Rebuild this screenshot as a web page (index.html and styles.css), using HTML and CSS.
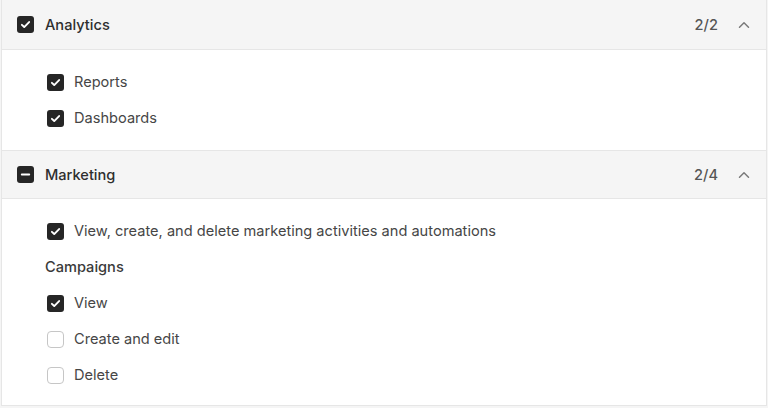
FILE: index.html
```html
<!DOCTYPE html>
<html>
<head>
<meta charset="utf-8">
<link rel="stylesheet" href="styles.css">
</head>
<body>
<div class="panel">
  <section class="group">
    <div class="group-head">
      <span class="cb cb-on"><svg viewBox="0 0 16 16"><path d="M4.6 8.3l2.2 2.1 4.6-4.7"/></svg></span>
      <span class="group-title">Analytics</span>
      <span class="count">2/2</span>
      <svg class="chev" viewBox="0 0 12 8"><path d="M1.5 6.2L6 1.8l4.5 4.4"/></svg>
    </div>
    <div class="group-body">
      <div class="item"><span class="cb cb-on"><svg viewBox="0 0 16 16"><path d="M4.6 8.3l2.2 2.1 4.6-4.7"/></svg></span><span class="label">Reports</span></div>
      <div class="item"><span class="cb cb-on"><svg viewBox="0 0 16 16"><path d="M4.6 8.3l2.2 2.1 4.6-4.7"/></svg></span><span class="label">Dashboards</span></div>
    </div>
  </section>
  <section class="group">
    <div class="group-head">
      <span class="cb cb-on"><svg viewBox="0 0 16 16"><path d="M4.5 8h7"/></svg></span>
      <span class="group-title">Marketing</span>
      <span class="count">2/4</span>
      <svg class="chev" viewBox="0 0 12 8"><path d="M1.5 6.2L6 1.8l4.5 4.4"/></svg>
    </div>
    <div class="group-body">
      <div class="item"><span class="cb cb-on"><svg viewBox="0 0 16 16"><path d="M4.6 8.3l2.2 2.1 4.6-4.7"/></svg></span><span class="label">View, create, and delete marketing activities and automations</span></div>
      <div class="subhead">Campaigns</div>
      <div class="item"><span class="cb cb-on"><svg viewBox="0 0 16 16"><path d="M4.6 8.3l2.2 2.1 4.6-4.7"/></svg></span><span class="label">View</span></div>
      <div class="item"><span class="cb cb-off"></span><span class="label">Create and edit</span></div>
      <div class="item"><span class="cb cb-off"></span><span class="label">Delete</span></div>
    </div>
  </section>
</div>
</body>
</html>
```
FILE: styles.css
```css
* { box-sizing: border-box; }
html, body { margin: 0; padding: 0; }
body {
  background: #f5f5f5;
  font-family: Inter, "Noto Sans", sans-serif;
  font-size: 14.6px;
  color: #444;
  width: 768px;
  height: 408px;
  overflow: hidden;
}
.panel {
  margin: 0 1px;
  background: #fff;
  border: 1px solid #e6e6e6;
  border-top: none;
  height: 406px;
}
.group-head {
  display: flex;
  align-items: center;
  height: 50px;
  padding: 0 16px 0 15px;
  background: #f5f5f5;
  border-bottom: 1px solid #e6e6e6;
}
.group + .group .group-head { border-top: 1px solid #e6e6e6; height: 49px; }
.group-title {
  margin-left: 11px;
  font-weight: 500;
  color: #2e2e2e;
  flex: 1;
}
.count {
  font-weight: 500;
  color: #555;
  margin-right: 20px;
}
.chev {
  width: 12px;
  height: 8px;
  fill: none;
  stroke: #7a7a7a;
  stroke-width: 1.5;
  stroke-linecap: round;
  stroke-linejoin: round;
}
.cb {
  width: 17px;
  height: 17px;
  border-radius: 3px;
  flex: none;
  display: flex;
}
.cb svg {
  width: 17px;
  height: 17px;
  fill: none;
  stroke: #fff;
  stroke-width: 1.8;
  stroke-linecap: round;
  stroke-linejoin: round;
}
.cb-on { background: #262626; }
.cb-off { border: 1.5px solid #c6c6c6; border-radius: 4px; background: #fff; }
.group-body {
  padding: 22px 0 22px 45px;
  display: flex;
  flex-direction: column;
  gap: 16px;
}
.group + .group .group-body { padding-top: 22px; }
.item {
  display: flex;
  align-items: center;
  height: 20px;
}
.label { margin-left: 10px; color: #464646; }
.subhead {
  height: 20px;
  line-height: 20px;
  margin-left: -2px;
  font-weight: 500;
  color: #3a3a3a;
}
```
